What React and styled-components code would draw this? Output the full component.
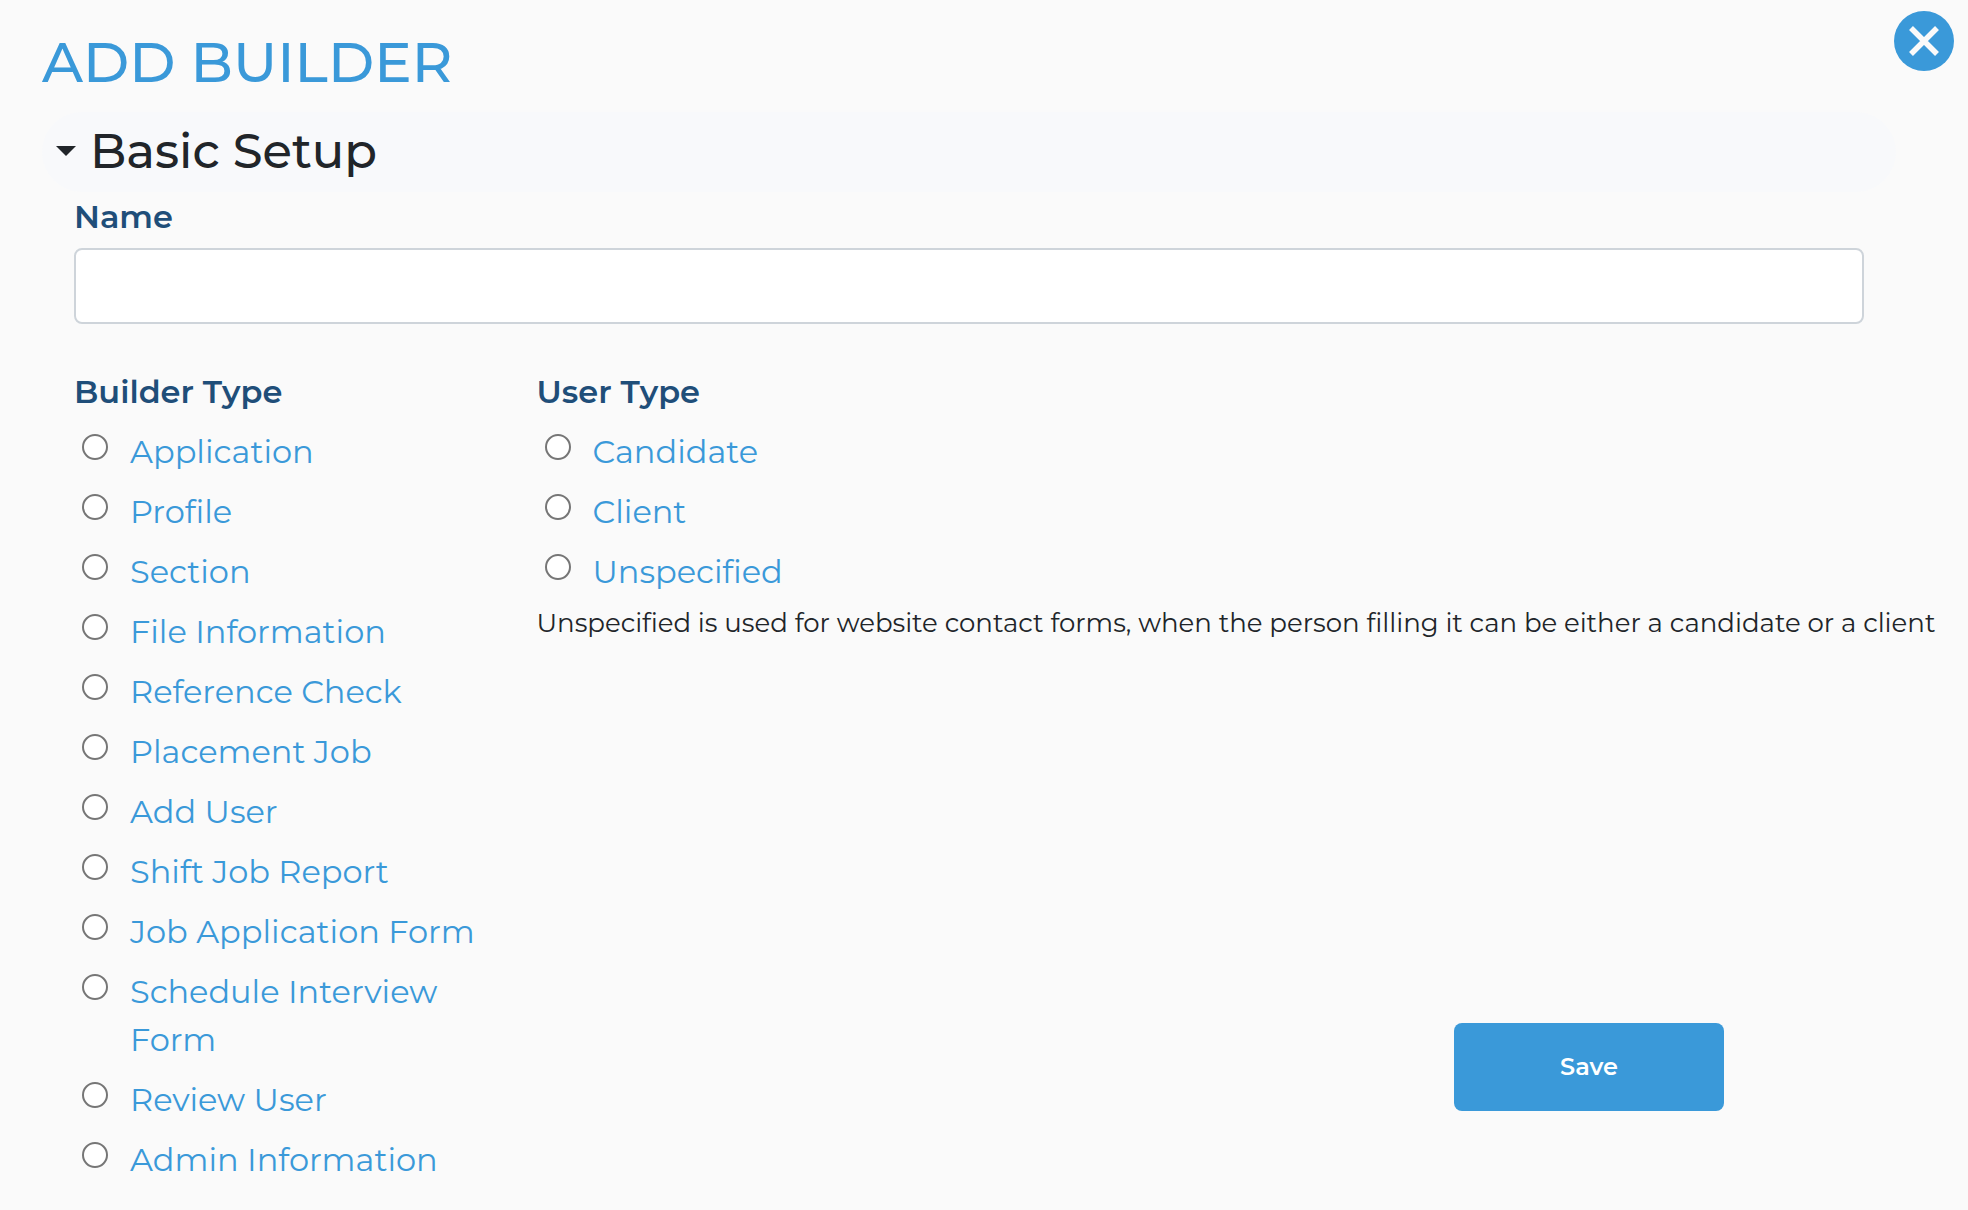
import React from "react";
import styled, { createGlobalStyle } from "styled-components";

const GlobalStyle = createGlobalStyle`
  *, *::before, *::after { box-sizing: border-box; }
  body {
    margin: 0;
    background: #fafafa;
    color: #212529;
    font-family: Montserrat, Inter, "Open Sans", sans-serif;
  }
`;

const Page = styled.main`
  display: flex;
  flex-direction: column;
  min-height: 100vh;
  padding: 28px 44px 12px 42px;
`;

const CloseButton = styled.button`
  position: absolute;
  top: 11px;
  right: 14px;
  display: grid;
  place-items: center;
  width: 60px;
  height: 60px;
  padding: 0;
  border: 0;
  border-radius: 50%;
  background: #3a99d9;
  color: #fafafa;
  cursor: pointer;
`;

const Title = styled.h1`
  margin: 0 0 16px;
  color: #3a99d9;
  font-size: 56px;
  font-weight: 500;
  line-height: 68px;
  text-transform: uppercase;
`;

const SectionHeader = styled.h2`
  margin: 0 28px 0 0;
`;

const SectionToggle = styled.button`
  display: flex;
  align-items: center;
  gap: 14px;
  width: 100%;
  height: 80px;
  padding: 0 14px 2px;
  border: 0;
  border-radius: 40px;
  background: #f8f9fb;
  color: #212529;
  font: inherit;
  font-size: 48px;
  font-weight: 500;
  line-height: 60px;
  text-align: left;
`;

const Caret = styled.span`
  border: 10px solid transparent;
  border-top-color: currentColor;
  border-bottom: 0;
`;

const Form = styled.form`
  display: flex;
  flex: 1;
  flex-direction: column;
  padding-left: 32px;
`;

const NameField = styled.div`
  display: flex;
  flex-direction: column;
  margin: 0 60px 43px 0;
`;

const headingText = `
  padding: 0;
  color: #1f4e79;
  font-size: 32px;
  font-weight: 600;
  line-height: 50px;
`;

const NameLabel = styled.label`
  ${headingText}
  margin-bottom: 6px;
`;

const NameInput = styled.input`
  height: 76px;
  padding: 12px 24px;
  border: 2px solid #ced4da;
  border-radius: 8px;
  background: #fff;
  color: #495057;
  font: inherit;
  font-size: 32px;
`;

const Columns = styled.div`
  display: grid;
  flex: 1;
  grid-template-columns: 1fr 3fr;
`;

const Column = styled.div`
  display: flex;
  flex-direction: column;
  min-width: 0;
`;

const RadioGroup = styled.fieldset`
  min-width: 0;
  margin: 0;
  padding: 0;
  border: 0;
`;

const GroupTitle = styled.legend`
  ${headingText}
  margin-bottom: 11px;
`;

const Option = styled.div`
  display: flex;
  align-items: flex-start;
  gap: 22px;
  margin-bottom: 12px;
  padding: 0 44px 0 8px;
`;

const Radio = styled.input`
  flex: none;
  width: 26px;
  height: 26px;
  margin: 6px 0 0;
  border: 2px solid #767676;
  border-radius: 50%;
  background: #fff;
  appearance: none;

  &:checked {
    border-color: #3a99d9;
    background: radial-gradient(#3a99d9 50%, #fff 55%);
  }
`;

const OptionLabel = styled.label`
  color: #3a99d9;
  font-size: 32px;
  line-height: 48px;
`;

const Hint = styled.p`
  margin: 0;
  font-size: 26px;
  line-height: 30px;
  white-space: nowrap;
`;

const Actions = styled.div`
  display: flex;
  justify-content: flex-end;
  margin-top: auto;
  padding: 0 200px 87px 0;
`;

const SaveButton = styled.button`
  width: 270px;
  height: 88px;
  padding: 0 0 2px;
  border: 0;
  border-radius: 8px;
  background: #3a99d9;
  color: #fff;
  font: inherit;
  font-size: 24px;
  font-weight: 600;
  cursor: pointer;
`;

const builderTypes = [
  "Application",
  "Profile",
  "Section",
  "File Information",
  "Reference Check",
  "Placement Job",
  "Add User",
  "Shift Job Report",
  "Job Application Form",
  "Schedule Interview Form",
  "Review User",
  "Admin Information",
];

const userTypes = ["Candidate", "Client", "Unspecified"];

function RadioList({ title, name, options }) {
  return (
    <RadioGroup>
      <GroupTitle>{title}</GroupTitle>
      {options.map((option, index) => (
        <Option key={option}>
          <Radio type="radio" id={`${name}-${index}`} name={name} value={option} />
          <OptionLabel htmlFor={`${name}-${index}`}>{option}</OptionLabel>
        </Option>
      ))}
    </RadioGroup>
  );
}

export default function App() {
  return (
    <>
      <GlobalStyle />
      <Page>
        <CloseButton type="button" aria-label="Close">
          <svg width="30" height="30" viewBox="0 0 30 30" aria-hidden="true">
            <path d="M2 2L28 28M28 2L2 28" fill="none" stroke="currentColor" strokeWidth="5.5" />
          </svg>
        </CloseButton>
        <Title>Add Builder</Title>
        <SectionHeader>
          <SectionToggle type="button" aria-expanded="true">
            <Caret />
            Basic Setup
          </SectionToggle>
        </SectionHeader>
        <Form onSubmit={(event) => event.preventDefault()}>
          <NameField>
            <NameLabel htmlFor="builder-name">Name</NameLabel>
            <NameInput id="builder-name" type="text" />
          </NameField>
          <Columns>
            <Column>
              <RadioList title="Builder Type" name="builder-type" options={builderTypes} />
            </Column>
            <Column>
              <RadioList title="User Type" name="user-type" options={userTypes} />
              <Hint>
                Unspecified is used for website contact forms, when the person filling it can be
                either a candidate or a client
              </Hint>
              <Actions>
                <SaveButton type="submit">Save</SaveButton>
              </Actions>
            </Column>
          </Columns>
        </Form>
      </Page>
    </>
  );
}
